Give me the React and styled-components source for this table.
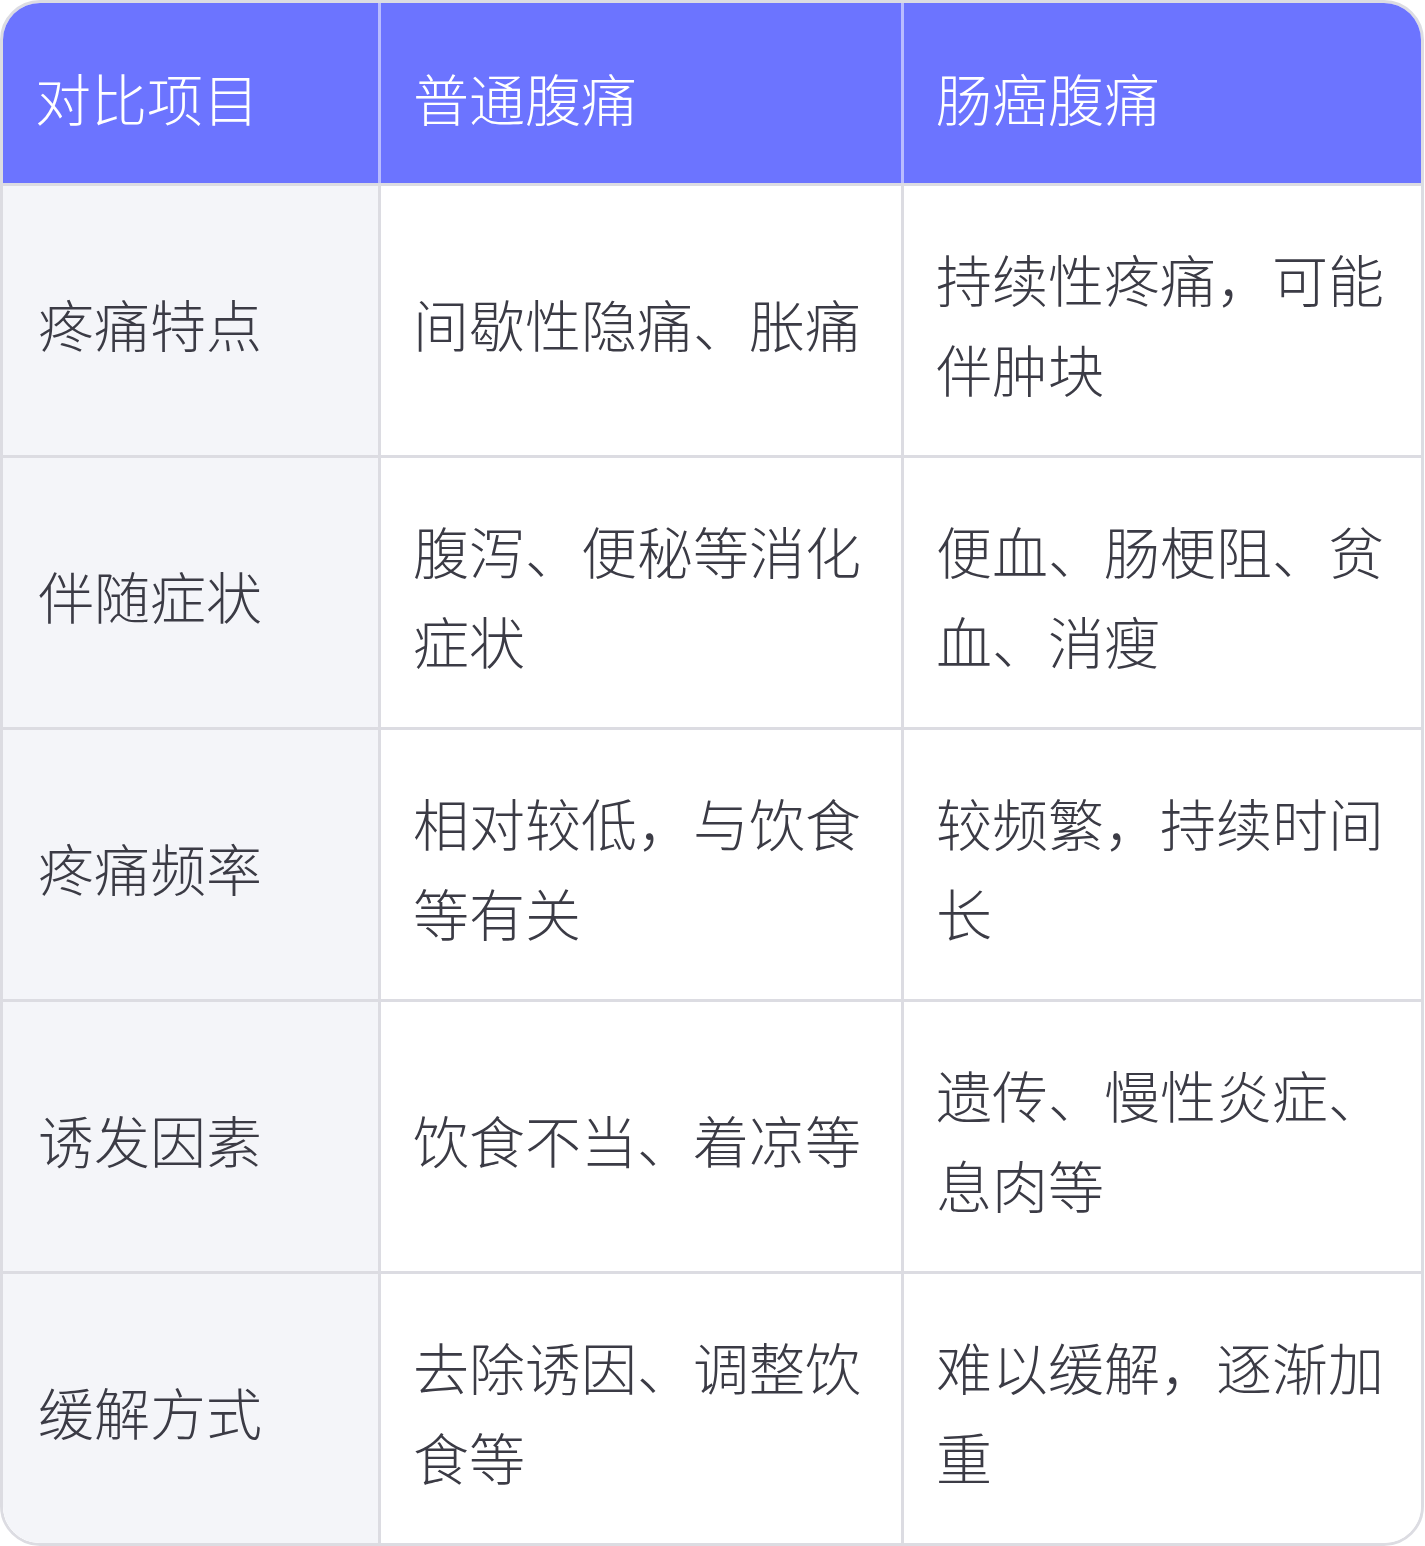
import React from "react";
import styled, { createGlobalStyle } from "styled-components";

const GlobalStyle = createGlobalStyle`
  body {
    margin: 0;
    background: #ffffff;
    font-family: "Noto Sans CJK SC", "Noto Sans", sans-serif;
  }
`;

const Table = styled.div`
  width: 1424px;
  border: 3px solid #dcdce2;
  border-radius: 40px;
  overflow: hidden;
  box-sizing: border-box;
  display: flex;
  flex-direction: column;
`;

const Row = styled.div`
  display: grid;
  grid-template-columns: 378px 523px 1fr;
  border-top: ${(p) => (p.$first ? "none" : "3px solid #dcdce2")};
  background: ${(p) => (p.$head ? "#6c74ff" : "#ffffff")};
`;

const Cell = styled.div`
  display: flex;
  align-items: center;
  box-sizing: border-box;
  min-height: ${(p) => (p.$head ? "180px" : "269px")};
  padding: ${(p) => (p.$head ? "8px" : "5px")} 28px 0
    ${(p) => (p.$label ? "35px" : "32px")};
  font-size: 56px;
  font-weight: 300;
  line-height: 90px;
  color: ${(p) => (p.$head ? "#ffffff" : "#3b3b45")};
  background: ${(p) => (p.$label ? "#f4f5f9" : "transparent")};
  border-right: ${(p) =>
    p.$last ? "none" : p.$head ? "3px solid #b9bcff" : "3px solid #dcdce2"};
`;

const headers = ["对比项目", "普通腹痛", "肠癌腹痛"];

const rows = [
  ["疼痛特点", "间歇性隐痛、胀痛", "持续性疼痛，可能伴肿块"],
  ["伴随症状", "腹泻、便秘等消化症状", "便血、肠梗阻、贫血、消瘦"],
  ["疼痛频率", "相对较低，与饮食等有关", "较频繁，持续时间长"],
  ["诱发因素", "饮食不当、着凉等", "遗传、慢性炎症、息肉等"],
  ["缓解方式", "去除诱因、调整饮食等", "难以缓解，逐渐加重"],
];

function App() {
  return (
    <>
      <GlobalStyle />
      <Table>
        <Row $head $first>
          {headers.map((h, i) => (
            <Cell key={h} $head $last={i === headers.length - 1}>
              {h}
            </Cell>
          ))}
        </Row>
        {rows.map((r) => (
          <Row key={r[0]}>
            {r.map((text, i) => (
              <Cell key={i} $label={i === 0} $last={i === r.length - 1}>
                {text}
              </Cell>
            ))}
          </Row>
        ))}
      </Table>
    </>
  );
}

export default App;
